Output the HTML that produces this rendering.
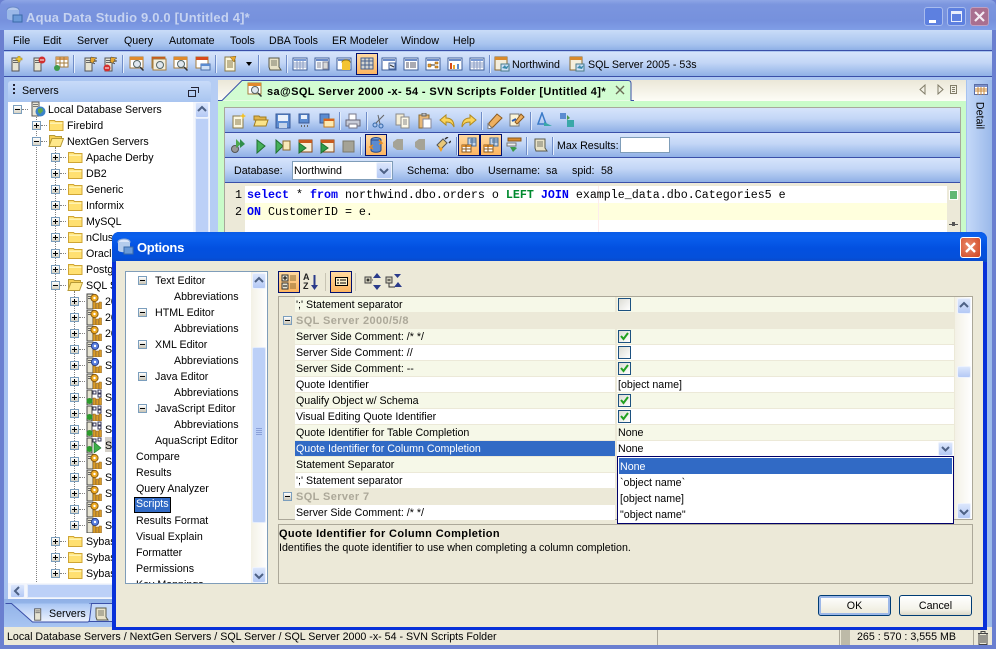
<!DOCTYPE html>
<html><head><meta charset="utf-8"><title>Aqua Data Studio</title>
<style>
html,body{margin:0;padding:0;width:996px;height:649px;overflow:hidden;background:#6a7fd0}
*{box-sizing:border-box}
body{font:10.67px/14px "Liberation Sans",sans-serif;color:#000;position:relative}
div,svg,span.a{position:absolute}
.t{white-space:nowrap;padding-top:1px}
.l .t{padding-top:0}
.m{padding-top:0;font-family:'Liberation Mono',monospace;font-size:11.67px}
.x{width:9px;height:9px;border:1px solid #7b9ebd;background:linear-gradient(#fff,#d6d2c4)}
.x:before{content:"";position:absolute;left:1px;top:3px;width:5px;height:1px;background:#000}
.x.p:after{content:"";position:absolute;left:3px;top:1px;width:1px;height:5px;background:#000}
.v{width:1px;border-left:1px dotted #808080}
.h{height:1px;width:6px;border-top:1px dotted #808080}
.tb{left:0;height:24px;background:linear-gradient(#d6e4fb,#c3d6f6 45%,#8fb0e6)}
.sep{height:18px;background:#6f8cc8;border-right:1px solid #e4eefc;width:2px}
.sel{border:1px solid #00106e;background:linear-gradient(#ffd9a0,#fdb560)}
.sb{background:linear-gradient(#dbe6fc,#b4c9f5);border:1px solid #eef3fd;border-radius:2px}
.r{left:295px;width:320px;height:15px;padding-left:1px}
.rv{left:617px;width:337px;height:15px;padding-left:1px}
.c{background:#f6f8e8}.w{background:#fff}
.ck{left:618px;width:13px;height:13px;border:1px solid #1c5180;background:linear-gradient(135deg,#dcdcd4,#fff)}
</style></head><body>
<svg width="0" height="0" style="left:0;top:0">
<defs>
<linearGradient id="tabg" x1="0" y1="0" x2="0" y2="1"><stop offset="0" stop-color="#a9c6f4"/><stop offset="1" stop-color="#eef3fd"/></linearGradient>
<symbol id="folder" viewBox="0 1 16 16"><path d="M1.500 4.500h5l1 1h7.500v9h-13.500z" fill="#ffe070" stroke="#cfa534"/><path d="M2 6.500h12.500v1.500H2z" fill="#fff3b0"/></symbol>
<symbol id="fopen" viewBox="0 1 16 16"><path d="M1.500 3.500h5l1 1h6v2H4L1.500 13z" fill="#f6cf55" stroke="#b79a36"/><path d="M4 6.500h11.500l-3 8H1z" fill="#ffe88a" stroke="#b79a36"/></symbol>
<symbol id="globe" viewBox="0 0 16 16"><path d="M2 1h7v14H2z" fill="#e9e6d6" stroke="#555"/><path d="M3 3h5v1H3zM3 5h5v1H3z" fill="#777"/><circle cx="10.500" cy="10.500" r="5" fill="#3b82c8"/><path d="M8 8l4-1 1 3-3 3-2-2z" fill="#5fa84a"/></symbol>
<symbol id="sg" viewBox="0 0 16 16"><path d="M1 1h6v15H1z" fill="#e6e3d2" stroke="#444"/><path d="M2 3h4v1H2zM2 5h4v1H2z" fill="#666"/><circle cx="8.500" cy="5" r="3.600" fill="#eeaa22" stroke="#8a5c10"/><circle cx="8.500" cy="5" r="1.200" fill="#fff"/><path d="M7 9h2.500v7H7zM10 10h2.500v6H10zM13 9h2.500v7H13z" fill="#d99c2a" stroke="#8a5c10" stroke-width=".5"/></symbol>
<symbol id="sb" viewBox="0 0 16 16"><path d="M1 1h6v15H1z" fill="#e6e3d2" stroke="#444"/><path d="M2 3h4v1H2zM2 5h4v1H2z" fill="#666"/><circle cx="9" cy="5" r="3.600" fill="#5a7fe0" stroke="#27408f"/><circle cx="9" cy="5" r="1.200" fill="#fff"/><path d="M7 9h2.500v7H7zM10 10h2.500v6H10zM13 9h2.500v7H13z" fill="#d99c2a" stroke="#8a5c10" stroke-width=".5"/></symbol>
<symbol id="st" viewBox="0 0 16 16"><path d="M1 1h5v15H1z" fill="#e6e3d2" stroke="#444"/><path d="M7 2h3v3H7zM12 1h3v3h-3zM12 5h3v3h-3z" fill="#fff" stroke="#335"/><circle cx="3.500" cy="12" r="3" fill="#2d9a2d"/><path d="M7 9h2.500v7H7zM10 10h2.500v6H10zM13 9h2.500v7H13z" fill="#d99c2a" stroke="#8a5c10" stroke-width=".5"/></symbol>
<symbol id="sp" viewBox="0 0 16 16"><path d="M1 1h5v15H1z" fill="#e6e3d2" stroke="#444"/><path d="M7 2h3v3H7zM12 1h3v3h-3z" fill="#fff" stroke="#335"/><circle cx="3.500" cy="12" r="3" fill="#2d9a2d"/><path d="M8 5l7 6-7 5z" fill="#3cb04a" stroke="#1d6e28" stroke-width=".6"/></symbol>
<symbol id="srv" viewBox="0 0 16 16"><path d="M3 2h7v13H3z" fill="#e6e3d2" stroke="#555"/><path d="M4 4h5v1H4zM4 6h5v1H4z" fill="#666"/></symbol>
<symbol id="srvp" viewBox="0 0 16 16"><use href="#srv"/><path d="M9 0h2v2h2v2h-2v2H9V4H7V2h2z" fill="#f2d13a" stroke="#a07c10" stroke-width=".6"/></symbol>
<symbol id="srvm" viewBox="0 0 16 16"><use href="#srv"/><circle cx="11" cy="4" r="3.500" fill="#d22f2f"/><path d="M9 3.500h4v1H9z" fill="#fff"/></symbol>
<symbol id="tgreen" viewBox="0 0 16 16"><path d="M3 1h12v10H3z" fill="#fff" stroke="#a67c3c"/><path d="M3 1h12v3H3z" fill="#d89a58"/><path d="M7 1v10M11 1v10M3 7h12" stroke="#a67c3c" fill="none"/><circle cx="4" cy="12" r="3" fill="#3f9a4c"/></symbol>
<symbol id="srvk" viewBox="0 0 16 16"><use href="#srv"/><path d="M9 1l6 1-3 2 3 1-4 1 2 2-5-2z" fill="#e8a830" stroke="#333" stroke-width=".5"/></symbol>
<symbol id="srvkm" viewBox="0 0 16 16"><use href="#srvk"/><circle cx="5" cy="12" r="3.500" fill="#d22f2f"/><path d="M3 11.500h4v1H3z" fill="#fff"/></symbol>
<symbol id="mag" viewBox="0 0 16 16"><path d="M1 1h13v11H1z" fill="#fff" stroke="#a67c3c"/><path d="M1 1h13v3H1z" fill="#e08a2c"/><circle cx="8" cy="8" r="3.500" fill="#dfe7ef" stroke="#566"/><path d="M11 11l3.500 3.500" stroke="#333" stroke-width="1.500"/></symbol>
<symbol id="magw" viewBox="0 0 16 16"><path d="M1 1h13v11H1z" fill="#fff" stroke="#a67c3c"/><path d="M1 1h13v3H1z" fill="#c85a1c"/><path d="M2 3h13v11H2z" fill="#f3efe0" stroke="#a67c3c"/><circle cx="9" cy="9" r="3.500" fill="#dfe7ef" stroke="#566"/></symbol>
<symbol id="tblw" viewBox="0 0 16 16"><path d="M1 1h12v11H1z" fill="#fff" stroke="#a67c3c"/><path d="M1 1h12v3H1z" fill="#d84a1c"/><path d="M6 8h9v6H6z" fill="#cfe0f7" stroke="#4a6ea8"/><path d="M6 8h9v2H6z" fill="#5b8bd0"/></symbol>
<symbol id="doc" viewBox="0 0 16 16"><path d="M3 1h8l2 3v11H3z" fill="#fbf7dc" stroke="#8a7a48"/><path d="M5 5h6M5 7h6M5 9h6M5 11h6" stroke="#8a7a48"/><path d="M8 1l6-1-2 6z" fill="#e8a830" stroke="#7a5810" stroke-width=".5"/></symbol>
<symbol id="scroll" viewBox="0 0 16 16"><path d="M3 2h10v9l2 3H4l-1-3z" fill="#e8e2c8" stroke="#5a5a4a"/><path d="M5 5h6M5 7h6M5 9h6" stroke="#7a7a6a"/></symbol>
<symbol id="grid" viewBox="0 0 16 16"><path d="M1 2h14v12H1z" fill="#fff" stroke="#3f5f9a"/><path d="M2 3h12v2H2z" fill="#7b9bd4"/><path d="M1 7h14M1 9h14M1 11h14M5 5v9M8 5v9M11 5v9" stroke="#8a9cc4"/></symbol>
<symbol id="gridl" viewBox="0 0 16 16"><path d="M1 2h14v12H1z" fill="#f4f7fc" stroke="#3f5f9a"/><path d="M2 3h12v2H2z" fill="#6b8bc8"/><path d="M9 6h5v7H9z" fill="#d8d8d8" stroke="#889"/><path d="M3 7h4M3 9h4M3 11h4" stroke="#889"/></symbol>
<symbol id="gridy" viewBox="0 0 16 16"><path d="M1 2h14v12H1z" fill="#fff" stroke="#3f5f9a"/><path d="M2 3h12v2H2z" fill="#6b8bc8"/><ellipse cx="10" cy="6" rx="4" ry="2" fill="#f4c430" stroke="#9a7a10"/><path d="M6 6h8v8H6z" fill="#f4c430"/></symbol>
<symbol id="gridb" viewBox="0 0 16 16"><path d="M2 2h12v11H2z" fill="#d5d5d0" stroke="#46608a"/><path d="M2 5h12M2 9h12M6 2v11M10 2v11" stroke="#46608a"/></symbol>
<symbol id="gridr" viewBox="0 0 16 16"><path d="M1 2h14v12H1z" fill="#fff" stroke="#3f5f9a"/><path d="M2 3h12v2H2z" fill="#6b8bc8"/><path d="M8 7h6v6H8z" fill="#dfe8f8" stroke="#3f5f9a"/><path d="M9 9l4 2" stroke="#333"/></symbol>
<symbol id="list" viewBox="0 0 16 16"><path d="M1 2h14v12H1z" fill="#fff" stroke="#3f5f9a"/><path d="M2 3h12v2H2z" fill="#6b8bc8"/><path d="M3 7h3M7 7h6M3 9h3M7 9h6M3 11h3M7 11h6" stroke="#556"/></symbol>
<symbol id="tree" viewBox="0 0 16 16"><path d="M1 2h14v12H1z" fill="#fff" stroke="#3f5f9a"/><path d="M2 3h12v2H2z" fill="#6b8bc8"/><path d="M3 8h3v3H3zM10 6h3v2h-3zM10 10h3v2h-3z" fill="#e89a2c" stroke="#8a5a10" stroke-width=".5"/><path d="M6 9h4" stroke="#333"/></symbol>
<symbol id="bars" viewBox="0 0 16 16"><path d="M1 2h14v12H1z" fill="#fff" stroke="#3f5f9a"/><path d="M2 3h12v2H2z" fill="#6b8bc8"/><path d="M3 7h2v6H3z" fill="#d84a1c"/><path d="M6 9h2v4H6z" fill="#e8a830"/><path d="M10 8h2v5h-2z" fill="#5b8bd0"/></symbol>
<symbol id="sqlc" viewBox="0 0 16 16"><path d="M1 1h12v13H1z" fill="#f4eedc" stroke="#8a6a30"/><path d="M1 1h12v3H1z" fill="#d88a2c"/><path d="M7 8h8v7H7z" fill="#cfe0f7" stroke="#4a7a88"/><path d="M8 12l3-3 1 2 3-2-2 4z" fill="#3a8aaa"/></symbol>
<symbol id="new" viewBox="0 0 16 16"><path d="M2 3h10v12H2z" fill="#fbf7e0" stroke="#8a7a48"/><path d="M4 7h6M4 9h6M4 11h6" stroke="#8a7a48"/><path d="M12 0l1 2 2 1-2 1-1 2-1-2-2-1 2-1z" fill="#f2c12a"/></symbol>
<symbol id="open" viewBox="0 0 16 16"><path d="M1 3h5l1 1h6v3H1z" fill="#e0b44a" stroke="#a07c20"/><path d="M3 7h12l-2 6H1z" fill="#fbe48a" stroke="#a07c20"/></symbol>
<symbol id="save" viewBox="0 0 16 16"><path d="M1 1h14v14H1z" fill="#5b8bd0" stroke="#3a5a98"/><path d="M3 2h10v6H3z" fill="#eaf1fb"/><path d="M4 10h8v5H4z" fill="#c4d4ea"/></symbol>
<symbol id="saved" viewBox="0 0 16 16"><path d="M2 1h10v9H2z" fill="#5b8bd0" stroke="#3a5a98"/><path d="M4 2h6v4H4z" fill="#eaf1fb"/><path d="M4 12h1v2H4zM7 12h1v2H7zM10 12h1v2h-1z" fill="#666"/></symbol>
<symbol id="savet" viewBox="0 0 16 16"><path d="M1 1h9v9H1z" fill="#5b8bd0" stroke="#3a5a98"/><path d="M5 6h10v8H5z" fill="#fde9b0" stroke="#c87a1c"/><path d="M5 6h10v2H5z" fill="#d8621c"/></symbol>
<symbol id="print" viewBox="0 0 16 16"><path d="M4 1h7v6H4z" fill="#fff" stroke="#778"/><path d="M1 7h14v6H1z" fill="#c8ccd8" stroke="#667"/><path d="M4 11h8v4H4z" fill="#fff" stroke="#778"/></symbol>
<symbol id="cut" viewBox="0 0 16 16"><circle cx="3" cy="12" r="2" fill="none" stroke="#3468a8"/><circle cx="9" cy="13" r="2" fill="none" stroke="#3468a8"/><path d="M4 10L12 2M8 11L6 2" stroke="#666" fill="none"/></symbol>
<symbol id="copy" viewBox="0 0 16 16"><path d="M1 1h8v11H1z" fill="#f6efd8" stroke="#8a8a8a"/><path d="M6 4h8v11H6z" fill="#fcf8e8" stroke="#8a8a8a"/><path d="M8 7h4M8 9h4M8 11h4" stroke="#888"/></symbol>
<symbol id="paste" viewBox="0 0 16 16"><path d="M2 2h10v13H2z" fill="#e8b878" stroke="#8a6a30"/><path d="M5 0h4v3H5z" fill="#bbb" stroke="#666"/><path d="M6 6h8v9H6z" fill="#fff" stroke="#889"/></symbol>
<symbol id="undo" viewBox="0 0 16 16"><path d="M1 7l6-5v3c5 0 8 3 8 9-2-4-4-5-8-5v3z" fill="#fbd45a" stroke="#b08a20"/></symbol>
<symbol id="redo" viewBox="0 0 16 16"><path d="M15 7L9 2v3C4 5 1 8 1 14c2-4 4-5 8-5v3z" fill="#fbd45a" stroke="#b08a20"/></symbol>
<symbol id="brush" viewBox="0 0 16 16"><path d="M2 10l8-9 5 4-9 9-4 1z" fill="#eeb060" stroke="#8a5a20"/><path d="M1 11l4 4-4 1z" fill="#fff" stroke="#777"/></symbol>
<symbol id="brush2" viewBox="0 0 16 16"><path d="M1 1h9v12H1z" fill="#fbf4d8" stroke="#777"/><path d="M6 9l6-8 3 3-7 7z" fill="#eeb060" stroke="#8a5a20"/><path d="M3 8l4-2" stroke="#2a5ab0" stroke-width="2"/></symbol>
<symbol id="aa" viewBox="0 0 16 16"><path d="M5 1l4 11H1z" fill="none" stroke="#3a7ac8" stroke-width="1.500"/><path d="M7 10l8 4H7z" fill="#3aa8a8"/></symbol>
<symbol id="ab" viewBox="0 0 16 16"><path d="M1 1h6v6H1z" fill="#5b8bd0"/><path d="M8 8h7v7H8z" fill="#3aa8a8"/><path d="M8 3l3 3-3 2z" fill="#4a9a4a"/></symbol>
<symbol id="run" viewBox="0 0 16 16"><circle cx="5" cy="11" r="3.500" fill="#999" stroke="#555"/><path d="M6 1l5 5-5 4z" fill="#4ca84c"/><path d="M10 1l5 5-5 4z" fill="#2f8e4a"/></symbol>
<symbol id="play" viewBox="0 0 16 16"><path d="M4 2l8 6-8 7z" fill="#46b05a" stroke="#1f7030"/></symbol>
<symbol id="plays" viewBox="0 0 16 16"><path d="M1 2l7 6-7 7z" fill="#46b05a" stroke="#1f7030"/><path d="M8 3h7v9H8z" fill="#f8e8b8" stroke="#8a6a30"/></symbol>
<symbol id="playt" viewBox="0 0 16 16"><path d="M2 2h13v12H2z" fill="#f8efd8" stroke="#8a4a18"/><path d="M2 2h13v3H2z" fill="#c85a1c"/><path d="M2 5l7 5-7 5z" fill="#2f9e4a" stroke="#1f7030"/></symbol>
<symbol id="stop" viewBox="0 0 16 16"><path d="M3 3h11v11H3z" fill="#a5a396" stroke="#7a786c"/></symbol>
<symbol id="cyl" viewBox="0 0 16 16"><ellipse cx="8" cy="3" rx="5" ry="2.500" fill="#6a9ad8" stroke="#2a4a88"/><path d="M3 3v10c0 3 10 3 10 0V3z" fill="#5b8bd0" stroke="#2a4a88"/><path d="M11 3l3 3-3 1M5 12l-3-2 3-2" stroke="#e88a1c" fill="none" stroke-width="1.500"/></symbol>
<symbol id="gy" viewBox="0 0 16 16"><path d="M3 5l4-3h6v11H7l-4-3z" fill="#a5a396"/></symbol>
<symbol id="plug" viewBox="0 0 16 16"><path d="M2 8l6-6 4 4-6 6z" fill="#e8c87a" stroke="#555"/><path d="M10 2l3-2M14 6l2-2" stroke="#333" stroke-width="1.500"/><path d="M3 10l3 5 2-4z" fill="#f2a020"/></symbol>
<symbol id="gridc" viewBox="0 0 16 16"><path d="M7 1h8v8H7z" fill="#c4d4ea" stroke="#4a6e98"/><path d="M1 8h9v7H1z" fill="#fff" stroke="#8a5a20"/><path d="M1 8h9v2H1z" fill="#d88a2c"/><path d="M1 12h9M5 8v7" stroke="#8a5a20"/><path d="M9 3h6M9 5h6M11 1v8" stroke="#4a6e98"/></symbol>
<symbol id="form" viewBox="0 0 16 16"><path d="M2 1h13v3H2z" fill="#d88a2c" stroke="#8a5a20"/><path d="M1 6h9v3H1z" fill="#eee" stroke="#777"/><path d="M4 10l3 5 4-4-2-1z" fill="#3a9a4a"/></symbol>
</defs></svg>

<!-- title bar -->
<div style="left:0;top:0;width:996px;height:30px;background:linear-gradient(#8ea6e6,#7b95de 15%,#7691dd 70%,#7f9ee6);border-radius:6px 6px 0 0"></div>
<svg style="left:6px;top:6px" width="17" height="18"><ellipse cx="7" cy="4" rx="6" ry="3" fill="#b4c8ec" stroke="#6a8ac8"/><path d="M1 4v8c0 3 12 3 12 0V4z" fill="#9ab8e8"/><path d="M7 9h9v7H7z" fill="#6a9ad8" stroke="#3a6aa8"/></svg>
<div class="t" style="left:26px;top:9px;font:bold 13px/16px 'Liberation Sans',sans-serif;color:#c6d3f1;letter-spacing:.18px">Aqua Data Studio 9.0.0 [Untitled 4]*</div>
<div style="left:924px;top:7px;width:19px;height:19px;background:#5d80e0;border:1px solid #a8bcee;border-radius:3px"><div style="left:4px;top:12px;width:7px;height:3px;background:#fff"></div></div>
<div style="left:947px;top:7px;width:19px;height:19px;background:#5d80e0;border:1px solid #a8bcee;border-radius:3px"><div style="left:3px;top:3px;width:11px;height:11px;border:1px solid #e8eefc;border-top-width:3px"></div></div>
<div style="left:970px;top:7px;width:19px;height:19px;background:#a96f90;border:1px solid #c0a0c0;border-radius:3px"><svg width="17" height="17"><path d="M4 4l9 9M13 4l-9 9" stroke="#f4ecf4" stroke-width="2.200"/></svg></div>

<!-- window bg -->
<div style="left:4px;top:30px;width:988px;height:615px;background:linear-gradient(90deg,#a5c1ef,#bcd2f6 30%,#a5c1ef)"></div>

<!-- menu -->
<div style="left:4px;top:30px;width:988px;height:21px;background:linear-gradient(#c9dcf8,#a8c4ef 70%,#8fb0e6);border-bottom:1px solid #3a4fa8"></div>
<div class="t" style="left:13px;top:33px">File</div>
<div class="t" style="left:43px;top:33px">Edit</div>
<div class="t" style="left:77px;top:33px">Server</div>
<div class="t" style="left:124px;top:33px">Query</div>
<div class="t" style="left:169px;top:33px">Automate</div>
<div class="t" style="left:230px;top:33px">Tools</div>
<div class="t" style="left:269px;top:33px">DBA Tools</div>
<div class="t" style="left:332px;top:33px">ER Modeler</div>
<div class="t" style="left:401px;top:33px">Window</div>
<div class="t" style="left:453px;top:33px">Help</div>

<!-- main toolbar -->
<div class="tb" style="left:4px;top:52px;width:988px;height:25px;border-bottom:1px solid #3a4fa8"></div>
<svg style="left:9px;top:56px" width="16" height="16"><use href="#srvp"/></svg>
<svg style="left:31px;top:56px" width="16" height="16"><use href="#srvm"/></svg>
<svg style="left:53px;top:56px" width="16" height="16"><use href="#tgreen"/></svg>
<div class="sep" style="left:73px;top:55px"></div>
<svg style="left:82px;top:56px" width="16" height="16"><use href="#srvk"/></svg>
<svg style="left:102px;top:56px" width="16" height="16"><use href="#srvkm"/></svg>
<div class="sep" style="left:122px;top:55px"></div>
<svg style="left:129px;top:56px" width="16" height="16"><use href="#mag"/></svg>
<svg style="left:151px;top:56px" width="16" height="16"><use href="#magw"/></svg>
<svg style="left:173px;top:56px" width="16" height="16"><use href="#mag"/></svg>
<svg style="left:195px;top:56px" width="16" height="16"><use href="#tblw"/></svg>
<div class="sep" style="left:215px;top:55px"></div>
<svg style="left:222px;top:56px" width="16" height="16"><use href="#doc"/></svg>
<svg style="left:245px;top:62px" width="8" height="5"><path d="M1 0h6L4 4z" fill="#000"/></svg>
<div class="sep" style="left:258px;top:55px"></div>
<svg style="left:266px;top:56px" width="16" height="16"><use href="#scroll"/></svg>
<div class="sep" style="left:286px;top:55px"></div>
<svg style="left:292px;top:56px" width="16" height="16"><use href="#grid"/></svg>
<svg style="left:314px;top:56px" width="16" height="16"><use href="#gridl"/></svg>
<svg style="left:336px;top:56px" width="16" height="16"><use href="#gridy"/></svg>
<div class="sel" style="left:356px;top:53px;width:22px;height:22px"></div>
<svg style="left:359px;top:56px" width="16" height="16"><use href="#gridb"/></svg>
<svg style="left:381px;top:56px" width="16" height="16"><use href="#gridr"/></svg>
<svg style="left:403px;top:56px" width="16" height="16"><use href="#list"/></svg>
<svg style="left:425px;top:56px" width="16" height="16"><use href="#tree"/></svg>
<svg style="left:447px;top:56px" width="16" height="16"><use href="#bars"/></svg>
<svg style="left:469px;top:56px" width="16" height="16"><use href="#grid"/></svg>
<div class="sep" style="left:489px;top:55px"></div>
<svg style="left:494px;top:56px" width="16" height="16"><use href="#sqlc"/></svg>
<div class="t" style="left:512px;top:57px">Northwind</div>
<svg style="left:569px;top:56px" width="16" height="16"><use href="#sqlc"/></svg>
<div class="t" style="left:588px;top:57px">SQL Server 2005 - 53s</div>

<!-- left panel -->
<div style="left:8px;top:81px;width:203px;height:21px;background:linear-gradient(#c8dbf9,#a9c5f0);border-radius:3px 3px 0 0"></div>
<div style="left:13px;top:84px;width:2px;height:2px;background:#223;box-shadow:0 4px #223,0 8px #223"></div>
<div class="t" style="left:22px;top:83px">Servers</div>
<div style="left:188px;top:90px;width:8px;height:7px;border:1px solid #223"></div>
<div style="left:191px;top:87px;width:8px;height:6px;border:1px solid #223;border-bottom:0;border-left:0"></div>
<div style="left:8px;top:102px;width:185px;height:481px;background:#fff"></div>
<div style="left:193px;top:102px;width:17px;height:481px;background:#f4f6fb"></div>
<div style="left:195px;top:118px;width:14px;height:465px;background:#bcd0f7;border:1px solid #e4ecfb"></div>
<div class="sb" style="left:195px;top:102px;width:14px;height:16px"><svg width="12" height="14"><path d="M2 8l4-4 4 4" fill="none" stroke="#4d6185" stroke-width="2"/></svg></div>
<div class="v" style="left:36px;top:115px;height:467px"></div>
<div class="v" style="left:55px;top:147px;height:426px"></div>
<div class="v" style="left:74px;top:291px;height:234px"></div>
<div class="x" style="left:13px;top:105px"></div><div class="h" style="left:22px;top:109px"></div>
<svg style="left:30px;top:101px" width="16" height="16"><use href="#globe"/></svg>
<div class="t" style="left:48px;top:102px">Local Database Servers</div>
<div class="x p" style="left:32px;top:121px"></div><div class="h" style="left:41px;top:125px"></div>
<svg style="left:48px;top:117px" width="16" height="16"><use href="#folder"/></svg><div class="t" style="left:67px;top:118px">Firebird</div>
<div class="x" style="left:32px;top:137px"></div><div class="h" style="left:41px;top:141px"></div>
<svg style="left:48px;top:133px" width="16" height="16"><use href="#fopen"/></svg><div class="t" style="left:67px;top:134px">NextGen Servers</div>
<div class="x p" style="left:51px;top:153px"></div><div class="h" style="left:60px;top:157px"></div><svg style="left:67px;top:149px" width="16" height="16"><use href="#folder"/></svg><div class="t" style="left:86px;top:150px">Apache Derby</div>
<div class="x p" style="left:51px;top:169px"></div><div class="h" style="left:60px;top:173px"></div><svg style="left:67px;top:165px" width="16" height="16"><use href="#folder"/></svg><div class="t" style="left:86px;top:166px">DB2</div>
<div class="x p" style="left:51px;top:185px"></div><div class="h" style="left:60px;top:189px"></div><svg style="left:67px;top:181px" width="16" height="16"><use href="#folder"/></svg><div class="t" style="left:86px;top:182px">Generic</div>
<div class="x p" style="left:51px;top:201px"></div><div class="h" style="left:60px;top:205px"></div><svg style="left:67px;top:197px" width="16" height="16"><use href="#folder"/></svg><div class="t" style="left:86px;top:198px">Informix</div>
<div class="x p" style="left:51px;top:217px"></div><div class="h" style="left:60px;top:221px"></div><svg style="left:67px;top:213px" width="16" height="16"><use href="#folder"/></svg><div class="t" style="left:86px;top:214px">MySQL</div>
<div class="x p" style="left:51px;top:233px"></div><div class="h" style="left:60px;top:237px"></div><svg style="left:67px;top:229px" width="16" height="16"><use href="#folder"/></svg><div class="t" style="left:86px;top:230px">nCluster</div>
<div class="x p" style="left:51px;top:249px"></div><div class="h" style="left:60px;top:253px"></div><svg style="left:67px;top:245px" width="16" height="16"><use href="#folder"/></svg><div class="t" style="left:86px;top:246px">Oracle</div>
<div class="x p" style="left:51px;top:265px"></div><div class="h" style="left:60px;top:269px"></div><svg style="left:67px;top:261px" width="16" height="16"><use href="#folder"/></svg><div class="t" style="left:86px;top:262px">PostgreSQL</div>
<div class="x" style="left:51px;top:281px"></div><div class="h" style="left:60px;top:285px"></div><svg style="left:67px;top:277px" width="16" height="16"><use href="#fopen"/></svg><div class="t" style="left:86px;top:278px">SQL Server</div>
<div class="x p" style="left:70px;top:297px"></div><div class="h" style="left:79px;top:301px"></div><svg style="left:86px;top:293px" width="16" height="16"><use href="#sg"/></svg><div class="t" style="left:105px;top:294px">2000</div>
<div class="x p" style="left:70px;top:313px"></div><div class="h" style="left:79px;top:317px"></div><svg style="left:86px;top:309px" width="16" height="16"><use href="#sg"/></svg><div class="t" style="left:105px;top:310px">2005</div>
<div class="x p" style="left:70px;top:329px"></div><div class="h" style="left:79px;top:333px"></div><svg style="left:86px;top:325px" width="16" height="16"><use href="#sg"/></svg><div class="t" style="left:105px;top:326px">2008</div>
<div class="x p" style="left:70px;top:345px"></div><div class="h" style="left:79px;top:349px"></div><svg style="left:86px;top:341px" width="16" height="16"><use href="#sb"/></svg><div class="t" style="left:105px;top:342px">SQL</div>
<div class="x p" style="left:70px;top:361px"></div><div class="h" style="left:79px;top:365px"></div><svg style="left:86px;top:357px" width="16" height="16"><use href="#sb"/></svg><div class="t" style="left:105px;top:358px">SQL</div>
<div class="x p" style="left:70px;top:377px"></div><div class="h" style="left:79px;top:381px"></div><svg style="left:86px;top:373px" width="16" height="16"><use href="#sg"/></svg><div class="t" style="left:105px;top:374px">SQL</div>
<div class="x p" style="left:70px;top:393px"></div><div class="h" style="left:79px;top:397px"></div><svg style="left:86px;top:389px" width="16" height="16"><use href="#st"/></svg><div class="t" style="left:105px;top:390px">SQL</div>
<div class="x p" style="left:70px;top:409px"></div><div class="h" style="left:79px;top:413px"></div><svg style="left:86px;top:405px" width="16" height="16"><use href="#st"/></svg><div class="t" style="left:105px;top:406px">SQL</div>
<div class="x p" style="left:70px;top:425px"></div><div class="h" style="left:79px;top:429px"></div><svg style="left:86px;top:421px" width="16" height="16"><use href="#st"/></svg><div class="t" style="left:105px;top:422px">SQL</div>
<div class="x p" style="left:70px;top:441px"></div><div class="h" style="left:79px;top:445px"></div><svg style="left:86px;top:437px" width="16" height="16"><use href="#sp"/></svg><div style="left:105px;top:437px;width:10px;height:15px;background:#d4d0c8"></div><div class="t" style="left:105px;top:438px">SQL</div>
<div class="x p" style="left:70px;top:457px"></div><div class="h" style="left:79px;top:461px"></div><svg style="left:86px;top:453px" width="16" height="16"><use href="#sg"/></svg><div class="t" style="left:105px;top:454px">SQL</div>
<div class="x p" style="left:70px;top:473px"></div><div class="h" style="left:79px;top:477px"></div><svg style="left:86px;top:469px" width="16" height="16"><use href="#sg"/></svg><div class="t" style="left:105px;top:470px">SQL</div>
<div class="x p" style="left:70px;top:489px"></div><div class="h" style="left:79px;top:493px"></div><svg style="left:86px;top:485px" width="16" height="16"><use href="#sg"/></svg><div class="t" style="left:105px;top:486px">SQL</div>
<div class="x p" style="left:70px;top:505px"></div><div class="h" style="left:79px;top:509px"></div><svg style="left:86px;top:501px" width="16" height="16"><use href="#sg"/></svg><div class="t" style="left:105px;top:502px">SQL</div>
<div class="x p" style="left:70px;top:521px"></div><div class="h" style="left:79px;top:525px"></div><svg style="left:86px;top:517px" width="16" height="16"><use href="#sb"/></svg><div class="t" style="left:105px;top:518px">SQL</div>
<div class="x p" style="left:51px;top:537px"></div><div class="h" style="left:60px;top:541px"></div><svg style="left:67px;top:533px" width="16" height="16"><use href="#folder"/></svg><div class="t" style="left:86px;top:534px">Sybase ASE</div>
<div class="x p" style="left:51px;top:553px"></div><div class="h" style="left:60px;top:557px"></div><svg style="left:67px;top:549px" width="16" height="16"><use href="#folder"/></svg><div class="t" style="left:86px;top:550px">Sybase IQ</div>
<div class="x p" style="left:51px;top:569px"></div><div class="h" style="left:60px;top:573px"></div><svg style="left:67px;top:565px" width="16" height="16"><use href="#folder"/></svg><div class="t" style="left:86px;top:566px">Sybase SQL</div>

<div style="left:8px;top:583px;width:202px;height:16px;background:#f4f6fb"></div>
<div class="sb" style="left:10px;top:584px;width:15px;height:14px"><svg width="13" height="12"><path d="M8 2L4 6l4 4" fill="none" stroke="#4d6185" stroke-width="2"/></svg></div>
<div style="left:27px;top:584px;width:180px;height:14px;background:#bcd0f7;border:1px solid #e4ecfb"></div>
<!-- bottom tabs -->
<div style="left:4px;top:599px;width:214px;height:28px;background:linear-gradient(#8fb0e6,#a8c5f2)"></div>
<svg style="left:5px;top:600px" width="110" height="27"><path d="M84.500 3.500h25v18h-26z" fill="#c4d8f8" stroke="#3a4fa8"/><path d="M4.500 3.500h2l21 18.500h55q1.500 0 2-2l2-16.500z" fill="url(#tabg)"/><path d="M.5 3.500h6l21 18.500h55q1.500 0 2-2l2-16.500h24" fill="none" stroke="#3a4fa8"/></svg>
<svg style="left:32px;top:606px" width="14" height="16"><use href="#srv"/></svg>
<div class="t" style="left:49px;top:606px">Servers</div>
<svg style="left:93px;top:606px" width="16" height="16"><use href="#scroll"/></svg>

<!-- right: tab area -->
<div style="left:218px;top:80px;width:748px;height:21px;background:linear-gradient(#ebe7d8,#fdfcf6)"></div>
<svg style="left:218px;top:79px" width="416" height="23"><path d="M0 21.500h4L24 1.500h389v20H3z" fill="#d2fcd2"/><path d="M0 21.500h4L24 1.500h386q3 0 3 3v17h335" fill="none" stroke="#3a4fa8"/><path d="M413 21.500h3" stroke="#3a4fa8"/></svg>
<svg style="left:247px;top:82px" width="16" height="16"><use href="#mag"/></svg>
<div class="t" style="left:267px;top:84px;font-size:11px;font-weight:bold;letter-spacing:.38px">sa@SQL Server 2000 -x- 54 - SVN Scripts Folder [Untitled 4]*</div>
<svg style="left:615px;top:85px" width="10" height="10"><path d="M1 1l8 8M9 1L1 9" stroke="#6b6b55" stroke-width="1.400"/></svg>
<svg style="left:917px;top:84px" width="40" height="11"><path d="M8 1L3 5.500 8 10z" fill="none" stroke="#807c68"/><path d="M21 1l5 4.500-5 4.500z" fill="none" stroke="#807c68"/><path d="M33.500 1.500h6v8h-6zM35 3.500h3M35 5.500h3M35 7.500h3" fill="none" stroke="#807c68"/></svg>
<div style="left:218px;top:101px;width:748px;height:135px;background:#c9fbc9"></div>
<div style="left:967px;top:80px;width:25px;height:548px;background:linear-gradient(90deg,#c4d8f8,#9ab9ea)"></div>
<svg style="left:974px;top:84px" width="14" height="11"><path d="M.5.500h13v10H.5z" fill="#fff" stroke="#5a6ea8"/><path d="M1 1h12v2H1z" fill="#7b8fc8"/><path d="M1 5h12M1 7h12M4 3v8M7 3v8M10 3v8" stroke="#c88a3c"/></svg>
<div class="t" style="left:966px;top:108px;width:28px;text-align:center;transform:rotate(90deg)">Detail</div>

<!-- editor panel -->
<div style="left:224px;top:107px;width:737px;height:130px;background:#ece9d8;border:1px solid #a8a89a"></div>
<div class="tb" style="left:225px;top:108px;width:735px;height:25px;border-bottom:1px solid #3a4fa8"></div>
<div class="tb" style="left:225px;top:133px;width:735px;height:25px;border-bottom:1px solid #3a4fa8"></div>
<div class="tb" style="left:225px;top:158px;width:735px;height:25px;border-bottom:1px solid #3a4fa8"></div>
<svg style="left:231px;top:113px" width="16" height="16"><use href="#new"/></svg>
<svg style="left:253px;top:113px" width="16" height="16"><use href="#open"/></svg>
<svg style="left:275px;top:113px" width="16" height="16"><use href="#save"/></svg>
<svg style="left:297px;top:113px" width="16" height="16"><use href="#saved"/></svg>
<svg style="left:319px;top:113px" width="16" height="16"><use href="#savet"/></svg>
<div class="sep" style="left:339px;top:112px"></div>
<svg style="left:345px;top:113px" width="16" height="16"><use href="#print"/></svg>
<div class="sep" style="left:366px;top:112px"></div>
<svg style="left:372px;top:113px" width="16" height="16"><use href="#cut"/></svg>
<svg style="left:395px;top:113px" width="16" height="16"><use href="#copy"/></svg>
<svg style="left:417px;top:113px" width="16" height="16"><use href="#paste"/></svg>
<svg style="left:439px;top:113px" width="16" height="16"><use href="#undo"/></svg>
<svg style="left:461px;top:113px" width="16" height="16"><use href="#redo"/></svg>
<div class="sep" style="left:481px;top:112px"></div>
<svg style="left:487px;top:113px" width="16" height="16"><use href="#brush"/></svg>
<svg style="left:509px;top:113px" width="16" height="16"><use href="#brush2"/></svg>
<div class="sep" style="left:530px;top:112px"></div>
<svg style="left:537px;top:112px" width="16" height="16"><use href="#aa"/></svg>
<svg style="left:559px;top:112px" width="16" height="16"><use href="#ab"/></svg>

<svg style="left:230px;top:138px" width="16" height="16"><use href="#run"/></svg>
<svg style="left:253px;top:138px" width="16" height="16"><use href="#play"/></svg>
<svg style="left:275px;top:138px" width="16" height="16"><use href="#plays"/></svg>
<svg style="left:297px;top:138px" width="16" height="16"><use href="#playt"/></svg>
<svg style="left:319px;top:138px" width="16" height="16"><use href="#playt"/></svg>
<svg style="left:340px;top:138px" width="16" height="16"><use href="#stop"/></svg>
<div class="sep" style="left:360px;top:137px"></div>
<div class="sel" style="left:365px;top:134px;width:22px;height:22px"></div>
<svg style="left:368px;top:137px" width="16" height="16"><use href="#cyl"/></svg>
<svg style="left:390px;top:137px" width="16" height="16"><use href="#gy"/></svg>
<svg style="left:412px;top:137px" width="16" height="16"><use href="#gy"/></svg>
<svg style="left:435px;top:137px" width="16" height="16"><use href="#plug"/></svg>
<div class="sep" style="left:456px;top:137px"></div>
<div class="sel" style="left:458px;top:134px;width:22px;height:22px"></div>
<svg style="left:461px;top:137px" width="16" height="16"><use href="#gridc"/></svg>
<div class="sel" style="left:480px;top:134px;width:22px;height:22px"></div>
<svg style="left:483px;top:137px" width="16" height="16"><use href="#gridc"/></svg>
<svg style="left:506px;top:137px" width="16" height="16"><use href="#form"/></svg>
<div class="sep" style="left:526px;top:137px"></div>
<svg style="left:532px;top:137px" width="16" height="16"><use href="#scroll"/></svg>
<div class="sep" style="left:552px;top:137px"></div>
<div class="t" style="left:557px;top:138px">Max Results:</div>
<div style="left:620px;top:137px;width:50px;height:16px;background:#fff;border:1px solid #7f9db9"></div>

<div class="t" style="left:234px;top:163px">Database:</div>
<div style="left:292px;top:161px;width:101px;height:19px;background:#fff;border:1px solid #7f9db9"></div>
<div class="t" style="left:294px;top:163px">Northwind</div>
<div class="sb" style="left:376px;top:162px;width:16px;height:17px"><svg width="14" height="15"><path d="M3 6l4 4 4-4" fill="none" stroke="#4d6185" stroke-width="2"/></svg></div>
<div class="t" style="left:407px;top:163px">Schema:</div><div class="t" style="left:456px;top:163px">dbo</div>
<div class="t" style="left:488px;top:163px">Username:</div><div class="t" style="left:546px;top:163px">sa</div>
<div class="t" style="left:572px;top:163px">spid:</div><div class="t" style="left:601px;top:163px">58</div>

<!-- editor -->
<div style="left:225px;top:186px;width:735px;height:50px;background:#fff"></div>
<div style="left:225px;top:186px;width:20px;height:50px;background:#ece9d8"></div>
<div style="left:245px;top:203px;width:702px;height:17px;background:#ffffdd"></div>
<div style="left:598px;top:186px;width:1px;height:50px;background:#fdecec"></div>
<div style="left:947px;top:186px;width:13px;height:50px;background:#ece9d8"></div>
<div style="left:949px;top:190px;width:9px;height:10px;background:#62b874;border:1px solid #fff"></div>
<div style="left:949px;top:224px;width:9px;height:1px;background:#555"></div><div style="left:952px;top:222px;width:3px;height:4px;background:#555"></div>
<div class="t m" style="left:235px;top:188px">1</div>
<div class="t m" style="left:235px;top:205px">2</div>
<div class="t m" style="left:247px;top:188px"><b style="color:#0000f0">select</b> * <b style="color:#0000f0">from</b> northwind.dbo.orders o <b style="color:#008a2e">LEFT</b> <b style="color:#0000f0">JOIN</b> example_data.dbo.Categories5 e</div>
<div class="t m" style="left:247px;top:205px"><b style="color:#0000f0">ON</b> CustomerID = e.</div>

<!-- status bar -->
<div style="left:4px;top:627px;width:988px;height:18px;background:#ece9d8"></div>
<div class="t" style="left:7px;top:629px">Local Database Servers / NextGen Servers / SQL Server / SQL Server 2000 -x- 54 - SVN Scripts Folder</div>
<div style="left:657px;top:630px;width:1px;height:15px;background:#aca899"></div>
<div style="left:839px;top:630px;width:1px;height:15px;background:#aca899"></div>
<div style="left:841px;top:630px;width:9px;height:15px;background:#bdbaa8"></div>
<div class="t" style="left:857px;top:629px">265 : 570 : 3,555 MB</div>
<div style="left:973px;top:630px;width:1px;height:15px;background:#aca899"></div>
<svg style="left:977px;top:631px" width="12" height="14"><path d="M1 2.500h10M2 2.500v11h8v-11M4 4v8M6 4v8M8 4v8M4 2V.5h4V2" fill="none" stroke="#444"/></svg>

<!-- dialog -->
<div style="left:112px;top:232px;width:875px;height:398px;background:#0831d9;border-radius:7px 7px 0 0"></div>
<div style="left:112px;top:232px;width:875px;height:30px;background:linear-gradient(#0a5be6,#0a60ee 15%,#0350e0 55%,#0450da 85%,#0a48c8);border-radius:7px 7px 0 0"></div>
<svg style="left:117px;top:238px" width="17" height="18"><ellipse cx="7" cy="4" rx="6" ry="3" fill="#dbe6f8" stroke="#8aa8d8"/><path d="M1 4v8c0 3 12 3 12 0V4z" fill="#b4ccec"/><path d="M7 9h9v7H7z" fill="#6a9ad8" stroke="#3a6aa8"/></svg>
<div class="t" style="left:137px;top:239px;font:bold 13px/16px 'Liberation Sans',sans-serif;color:#fff;letter-spacing:-.3px">Options</div>
<div style="left:960px;top:237px;width:21px;height:21px;background:radial-gradient(circle at 40% 40%,#ea8a6a,#cf4420);border:1px solid #fff;border-radius:3px"><svg width="19" height="19"><path d="M5 5l9 9M14 5l-9 9" stroke="#fff" stroke-width="2.400"/></svg></div>
<div style="left:116px;top:261px;width:867px;height:366px;background:#ece9d8"></div>

<!-- options list -->
<div class="l" style="left:125px;top:271px;width:143px;height:313px;background:#fff;border:1px solid #7f9db9;overflow:hidden">
<div class="x" style="left:12px;top:4px;background:linear-gradient(#fff,#c8c4b4)"></div><div class="t" style="left:29px;top:2px">Text Editor</div>
<div class="t" style="left:48px;top:18px">Abbreviations</div>
<div class="x" style="left:12px;top:36px;background:linear-gradient(#fff,#c8c4b4)"></div><div class="t" style="left:29px;top:34px">HTML Editor</div>
<div class="t" style="left:48px;top:50px">Abbreviations</div>
<div class="x" style="left:12px;top:68px;background:linear-gradient(#fff,#c8c4b4)"></div><div class="t" style="left:29px;top:66px">XML Editor</div>
<div class="t" style="left:48px;top:82px">Abbreviations</div>
<div class="x" style="left:12px;top:100px;background:linear-gradient(#fff,#c8c4b4)"></div><div class="t" style="left:29px;top:98px">Java Editor</div>
<div class="t" style="left:48px;top:114px">Abbreviations</div>
<div class="x" style="left:12px;top:132px;background:linear-gradient(#fff,#c8c4b4)"></div><div class="t" style="left:29px;top:130px">JavaScript Editor</div>
<div class="t" style="left:48px;top:146px">Abbreviations</div>
<div class="t" style="left:29px;top:162px">AquaScript Editor</div>
<div class="t" style="left:10px;top:178px">Compare</div>
<div class="t" style="left:10px;top:194px">Results</div>
<div class="t" style="left:10px;top:210px">Query Analyzer</div>
<div class="t" style="left:8px;top:225px;width:37px;height:16px;background:#316ac5;border:1px solid #000;color:#fff;padding-left:1px;line-height:13px">Scripts</div>
<div class="t" style="left:10px;top:242px">Results Format</div>
<div class="t" style="left:10px;top:258px">Visual Explain</div>
<div class="t" style="left:10px;top:274px">Formatter</div>
<div class="t" style="left:10px;top:290px">Permissions</div>
<div class="t" style="left:10px;top:306px">Key Mappings</div>
<div style="left:125px;top:0;width:16px;height:311px;background:linear-gradient(90deg,#f3f1e6,#fff)"></div>
<div class="sb" style="left:126px;top:1px;width:14px;height:16px"><svg width="12" height="14"><path d="M2 8l4-4 4 4" fill="none" stroke="#4d6185" stroke-width="2"/></svg></div>
<div style="left:126px;top:75px;width:14px;height:176px;background:#bcd0f7;border:1px solid #e4ecfb;border-radius:2px"><div style="left:3px;top:80px;width:6px;height:7px;background:repeating-linear-gradient(#8aa0d8 0 1px,transparent 1px 2px)"></div></div>
<div class="sb" style="left:126px;top:295px;width:14px;height:16px"><svg width="12" height="14"><path d="M2 6l4 4 4-4" fill="none" stroke="#4d6185" stroke-width="2"/></svg></div>
</div>

<!-- dialog toolbar -->
<div class="sel" style="left:278px;top:271px;width:22px;height:22px"><svg style="left:2px;top:2px" width="16" height="16"><path d="M1 1h6v6H1zM1 9h6v6H1z" fill="#e8e4d4" stroke="#333"/><path d="M2 4h4M4 2v4M2 12h4" stroke="#000"/><path d="M9 2h6M9 4h6M9 6h6M9 10h6M9 12h6M9 14h6" stroke="#8a6a30"/></svg></div>
<svg style="left:302px;top:272px" width="18" height="20"><text x="1" y="8" font-family="Liberation Sans" font-size="9" font-weight="bold" fill="#222">A</text><text x="1" y="17" font-family="Liberation Sans" font-size="9" font-weight="bold" fill="#222">Z</text><path d="M12.500 3v12" stroke="#2a3a8a" stroke-width="2"/><path d="M9 13h7l-3.500 5z" fill="#2a3a8a"/></svg>
<div style="left:325px;top:273px;width:1px;height:18px;background:#c8c4b4"></div>
<div class="sel" style="left:330px;top:271px;width:22px;height:22px"><svg style="left:4px;top:5px" width="13" height="10"><path d="M.5.500h12v8H.5z" fill="#fff0c8" stroke="#000"/><path d="M2 3h2M5 3h6M2 6h2M5 6h6" stroke="#000"/></svg></div>
<div style="left:355px;top:273px;width:1px;height:18px;background:#c8c4b4"></div>
<svg style="left:364px;top:273px" width="18" height="18"><path d="M1 4h6v6H1z" fill="#cfccba" stroke="#444"/><path d="M2.500 7h3M4 5.500v3" stroke="#000"/><path d="M8 7h2" stroke="#555" stroke-dasharray="1 1"/><path d="M13 0l4 5h-8zM13 17l-4-5h8z" fill="#2a3a8a"/></svg>
<svg style="left:385px;top:273px" width="18" height="18"><path d="M1 4h6v6H1z" fill="#cfccba" stroke="#444"/><path d="M2.500 7h3" stroke="#000"/><path d="M4 10v4h6" stroke="#333" fill="none"/><path d="M9 1h7l-3.500 4zM13 9l4 5H9z" fill="#2a3a8a"/></svg>

<!-- grid -->
<div style="left:278px;top:296px;width:695px;height:224px;background:#ece9d8;border:1px solid #aca899"></div>
<div style="left:955px;top:297px;width:17px;height:222px;background:linear-gradient(90deg,#f3f1e6,#fff)"></div>
<div class="sb" style="left:957px;top:298px;width:14px;height:16px"><svg width="12" height="14"><path d="M2 8l4-4 4 4" fill="none" stroke="#4d6185" stroke-width="2"/></svg></div>
<div class="sb" style="left:957px;top:366px;width:14px;height:12px"></div>
<div class="sb" style="left:957px;top:503px;width:14px;height:16px"><svg width="12" height="14"><path d="M2 6l4 4 4-4" fill="none" stroke="#4d6185" stroke-width="2"/></svg></div>

<div class="r c t" style="top:297px">';' Statement separator</div><div class="rv c" style="top:297px"></div><div class="ck" style="top:298px"></div>
<div class="x" style="left:283px;top:316px;background:linear-gradient(#fff,#c8c4b4)"></div><div class="t" style="left:296px;top:313px;font-size:11px;font-weight:bold;color:#aca899;letter-spacing:.38px">SQL Server 2000/5/8</div>
<div class="r c t" style="top:329px">Server Side Comment: /* */</div><div class="rv c" style="top:329px"></div>
<div class="r w t" style="top:345px">Server Side Comment: //</div><div class="rv w" style="top:345px"></div>
<div class="r c t" style="top:361px">Server Side Comment: --</div><div class="rv c" style="top:361px"></div>
<div class="r w t" style="top:377px">Quote Identifier</div><div class="rv w t" style="top:377px">[object name]</div>
<div class="r c t" style="top:393px">Qualify Object w/ Schema</div><div class="rv c" style="top:393px"></div>
<div class="r w t" style="top:409px">Visual Editing Quote Identifier</div><div class="rv w" style="top:409px"></div>
<div class="r c t" style="top:425px">Quote Identifier for Table Completion</div><div class="rv c t" style="top:425px">None</div>
<div class="r t" style="top:441px;background:#316ac5;color:#fff">Quote Identifier for Column Completion</div><div class="rv w t" style="top:441px">None</div>
<div class="r c t" style="top:457px">Statement Separator</div>
<div class="r w t" style="top:473px">';' Statement separator</div>
<div class="x" style="left:283px;top:492px;background:linear-gradient(#fff,#c8c4b4)"></div><div class="t" style="left:296px;top:489px;font-size:11px;font-weight:bold;color:#aca899;letter-spacing:.38px">SQL Server 7</div>
<div class="r w t" style="top:505px">Server Side Comment: /* */</div>

<div class="ck" style="top:330px"><svg width="11" height="11"><path d="M2 5l2.500 3L9 2" fill="none" stroke="#21a121" stroke-width="2"/></svg></div>
<div class="ck" style="top:346px"></div>
<div class="ck" style="top:362px"><svg width="11" height="11"><path d="M2 5l2.500 3L9 2" fill="none" stroke="#21a121" stroke-width="2"/></svg></div>
<div class="ck" style="top:394px"><svg width="11" height="11"><path d="M2 5l2.500 3L9 2" fill="none" stroke="#21a121" stroke-width="2"/></svg></div>
<div class="ck" style="top:410px"><svg width="11" height="11"><path d="M2 5l2.500 3L9 2" fill="none" stroke="#21a121" stroke-width="2"/></svg></div>
<div class="sb" style="left:938px;top:442px;width:15px;height:14px"><svg width="13" height="12"><path d="M3 4l3.500 3.500L10 4" fill="none" stroke="#4d6185" stroke-width="2"/></svg></div>

<!-- dropdown -->
<div style="left:617px;top:456px;width:337px;height:68px;background:#fff;border:1px solid #00006a">
<div class="t" style="left:1px;top:1px;width:333px;height:16px;background:#316ac5;color:#fff;padding:2px 0 0 1px">None</div>
<div class="t" style="left:2px;top:18px">`object name`</div>
<div class="t" style="left:2px;top:34px">[object name]</div>
<div class="t" style="left:2px;top:50px">"object name"</div>
</div>

<!-- description -->
<div style="left:278px;top:524px;width:695px;height:60px;border:1px solid #aca899"></div>
<div class="t" style="left:279px;top:526px;font-size:11px;font-weight:bold;letter-spacing:.38px">Quote Identifier for Column Completion</div>
<div class="t" style="left:279px;top:540px">Identifies the quote identifier to use when completing a column completion.</div>

<!-- buttons -->
<div class="t" style="left:818px;top:595px;width:73px;height:21px;border:1px solid #003c74;border-radius:3px;background:linear-gradient(#fff,#ece9d8);box-shadow:inset 0 0 0 2px #9db8e8;text-align:center;line-height:19px">OK</div>
<div class="t" style="left:899px;top:595px;width:73px;height:21px;border:1px solid #003c74;border-radius:3px;background:linear-gradient(#fff,#f4f3ea 70%,#dcd8c8);text-align:center;line-height:19px">Cancel</div>
</body></html>
